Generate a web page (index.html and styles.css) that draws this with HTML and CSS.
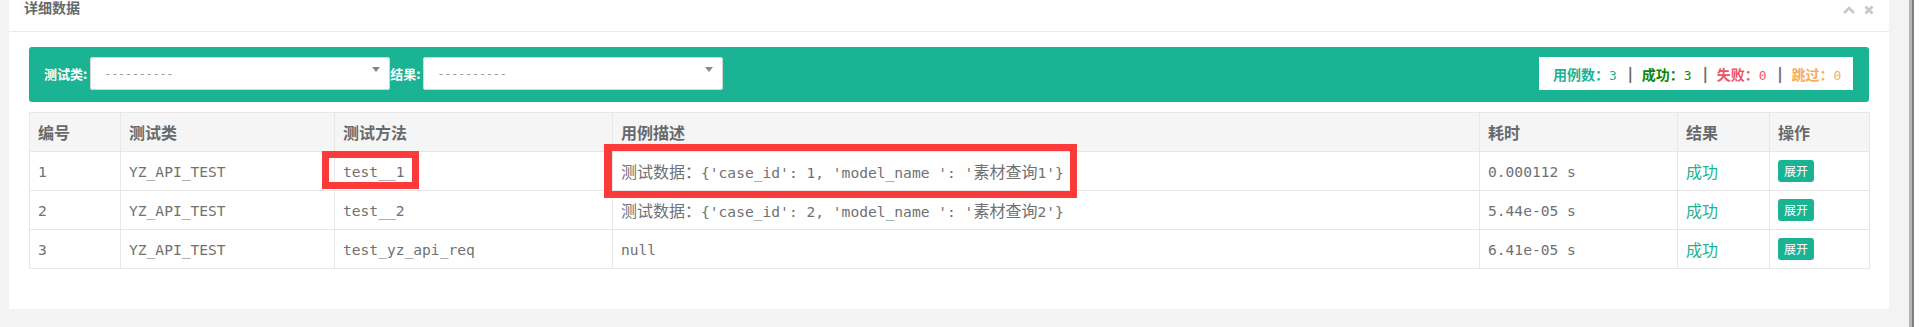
FILE: index.html
```html
<!DOCTYPE html>
<html lang="zh-CN">
<head>
    <meta charset="UTF-8">
    <title>详细数据</title>
    <link rel="stylesheet" href="styles.css">
</head>
<body>
    <div class="page">
        <div class="ibox">
            <div class="ibox-title">
                <h5>详细数据</h5>
                <div class="ibox-tools">
                    <svg width="12" height="8" viewBox="0 0 12 8"><path d="M1 7 L6 2 L11 7" fill="none" stroke="#c8c8c8" stroke-width="2.6"/></svg>
                    <svg width="10" height="10" viewBox="0 0 10 10"><path d="M1.5 1.5 L8.5 8.5 M8.5 1.5 L1.5 8.5" stroke="#c8c8c8" stroke-width="2.6"/></svg>
                </div>
            </div>
            <div class="ibox-content">
                <div class="filter-bar">
                    <label>测试类:</label>
                    <div class="select"><span class="placeholder">----------</span><i class="caret"></i></div>
                    <label>结果:</label>
                    <div class="select"><span class="placeholder">----------</span><i class="caret"></i></div>

                    <div class="stats">
                        <span class="stat total"><b>用例数：</b><span class="num">3</span></span>
                        <span class="sep">|</span>
                        <span class="stat pass"><b>成功：</b><span class="num">3</span></span>
                        <span class="sep">|</span>
                        <span class="stat fail"><b>失败：</b><span class="num">0</span></span>
                        <span class="sep">|</span>
                        <span class="stat skip"><b>跳过：</b><span class="num">0</span></span>
                    </div>
                </div>

                <div class="table-wrap">
                    <table class="detail-table">
                        <colgroup>
                            <col style="width:91px">
                            <col style="width:214px">
                            <col style="width:278px">
                            <col style="width:867px">
                            <col style="width:198px">
                            <col style="width:92px">
                            <col style="width:100px">
                        </colgroup>
                        <thead>
                            <tr>
                                <th>编号</th>
                                <th>测试类</th>
                                <th>测试方法</th>
                                <th>用例描述</th>
                                <th>耗时</th>
                                <th>结果</th>
                                <th>操作</th>
                            </tr>
                        </thead>
                        <tbody>
                            <tr>
                                <td>1</td>
                                <td>YZ_API_TEST</td>
                                <td>test__1</td>
                                <td><span class="zh">测试数据：</span>{'case_id': 1, 'model_name ': '<span class="zh">素材查询</span>1'}</td>
                                <td>0.000112 s</td>
                                <td><span class="ok">成功</span></td>
                                <td><span class="btn-open">展开</span></td>
                            </tr>
                            <tr>
                                <td>2</td>
                                <td>YZ_API_TEST</td>
                                <td>test__2</td>
                                <td><span class="zh">测试数据：</span>{'case_id': 2, 'model_name ': '<span class="zh">素材查询</span>2'}</td>
                                <td>5.44e-05 s</td>
                                <td><span class="ok">成功</span></td>
                                <td><span class="btn-open">展开</span></td>
                            </tr>
                            <tr>
                                <td>3</td>
                                <td>YZ_API_TEST</td>
                                <td>test_yz_api_req</td>
                                <td>null</td>
                                <td>6.41e-05 s</td>
                                <td><span class="ok">成功</span></td>
                                <td><span class="btn-open">展开</span></td>
                            </tr>
                        </tbody>
                    </table>

                    <!-- red annotation boxes -->
                    <div class="mark mark-method"></div>
                    <div class="mark mark-desc"></div>
                </div>
            </div>
        </div>
    </div>
    <div class="scrollbar"></div>
    <div class="edge"></div>
</body>
</html>
```

FILE: styles.css
```css
body {
    margin: 0;
    display: flex;
    height: 327px;
    overflow: hidden;
    background-color: #f3f3f4;
    font-family: "Noto Sans CJK SC", sans-serif;
    color: #676a6c;
}

.page {
    width: 1909px;
    flex: none;
    padding-left: 9px;
    box-sizing: border-box;
}

.ibox {
    width: 1880px;
    height: 309px;
    background-color: #fff;
}

.ibox-title {
    height: 31px;
    border-bottom: 1px solid #e7eaec;
    display: flex;
    justify-content: space-between;
    align-items: flex-start;
    padding: 0 15px;
}

.ibox-title h5 {
    margin: 0;
    font-size: 14px;
    font-weight: 700;
    line-height: 15px;
    color: #676a6c;
}

.ibox-tools {
    display: flex;
    align-items: flex-start;
    gap: 9px;
    padding-top: 5px;
}

.ibox-tools svg:first-child {
    margin-top: 1px;
}

.ibox-content {
    padding: 15px 20px 0;
}

.filter-bar {
    height: 55px;
    box-sizing: border-box;
    background-color: #1ab394;
    border-radius: 3px;
    display: flex;
    align-items: flex-start;
    padding: 10px 16px 0 15px;
}

.filter-bar label {
    color: #fff;
    font-size: 13px;
    font-weight: 700;
    line-height: 33px;
    margin-right: 3px;
}

.select {
    width: 300px;
    height: 33px;
    box-sizing: border-box;
    border: 1px solid #d5d5d5;
    border-radius: 2px;
    background-color: #fff;
    display: flex;
    align-items: center;
    justify-content: space-between;
    padding: 0 9px 0 13px;
}

.placeholder {
    font-family: "DejaVu Sans Mono", monospace;
    font-size: 11.5px;
    color: #999;
}

.caret {
    width: 0;
    height: 0;
    border-left: 4px solid transparent;
    border-right: 4px solid transparent;
    border-top: 5px solid #888;
    margin-bottom: 8px;
}

.stats {
    margin-left: auto;
    width: 314px;
    height: 33px;
    box-sizing: border-box;
    background-color: #fff;
    display: flex;
    align-items: center;
    padding-left: 14px;
    font-size: 14px;
}

.stat b {
    font-weight: 700;
}

.stat .num {
    font-family: "DejaVu Sans Mono", monospace;
    font-size: 13px;
}

.total { color: #1ab394; }
.pass { color: #0a870a; }
.fail { color: #ed5565; }
.skip { color: #f8ac59; }

.sep {
    font-family: "DejaVu Sans Mono", monospace;
    font-weight: 700;
    font-size: 15px;
    color: #6a6a6a;
    margin: 0 7px 0 9px;
}

.table-wrap {
    position: relative;
    margin-top: 10px;
}

.detail-table {
    width: 1840px;
    table-layout: fixed;
    border-collapse: collapse;
    border: 1px solid #e7e7e7;
}

.detail-table th,
.detail-table td {
    height: 38px;
    padding: 0 8px;
    border: 1px solid #e7e7e7;
    text-align: left;
    vertical-align: middle;
    white-space: nowrap;
}

.detail-table th {
    background-color: #f5f5f6;
    font-size: 16px;
    font-weight: 700;
    color: #676a6c;
}

.detail-table td {
    font-family: "DejaVu Sans Mono", monospace;
    font-size: 14.6px;
    color: #6f7173;
}

.zh {
    font-family: "Noto Sans CJK SC", sans-serif;
    font-size: 16px;
}

.ok {
    font-family: "Noto Sans CJK SC", sans-serif;
    font-size: 16px;
    color: #1ab394;
}

.btn-open {
    display: inline-block;
    height: 22px;
    line-height: 22px;
    padding: 0 6px;
    border-radius: 3px;
    background-color: #1ab394;
    color: #fff;
    font-family: "Noto Sans CJK SC", sans-serif;
    font-size: 12px;
    vertical-align: middle;
}

.mark {
    position: absolute;
    box-sizing: border-box;
    border: 7px solid #fd3a3a;
}

.mark-method {
    left: 293px;
    top: 39px;
    width: 97px;
    height: 38px;
}

.mark-desc {
    left: 575px;
    top: 32px;
    width: 473px;
    height: 54px;
    border-left-width: 8px;
}

.scrollbar {
    width: 5px;
    flex: none;
    background: linear-gradient(to right, #b4b4b4 60%, #7f7f7f 60%);
}

.edge {
    flex: 1;
    background-color: #fff;
}
```
